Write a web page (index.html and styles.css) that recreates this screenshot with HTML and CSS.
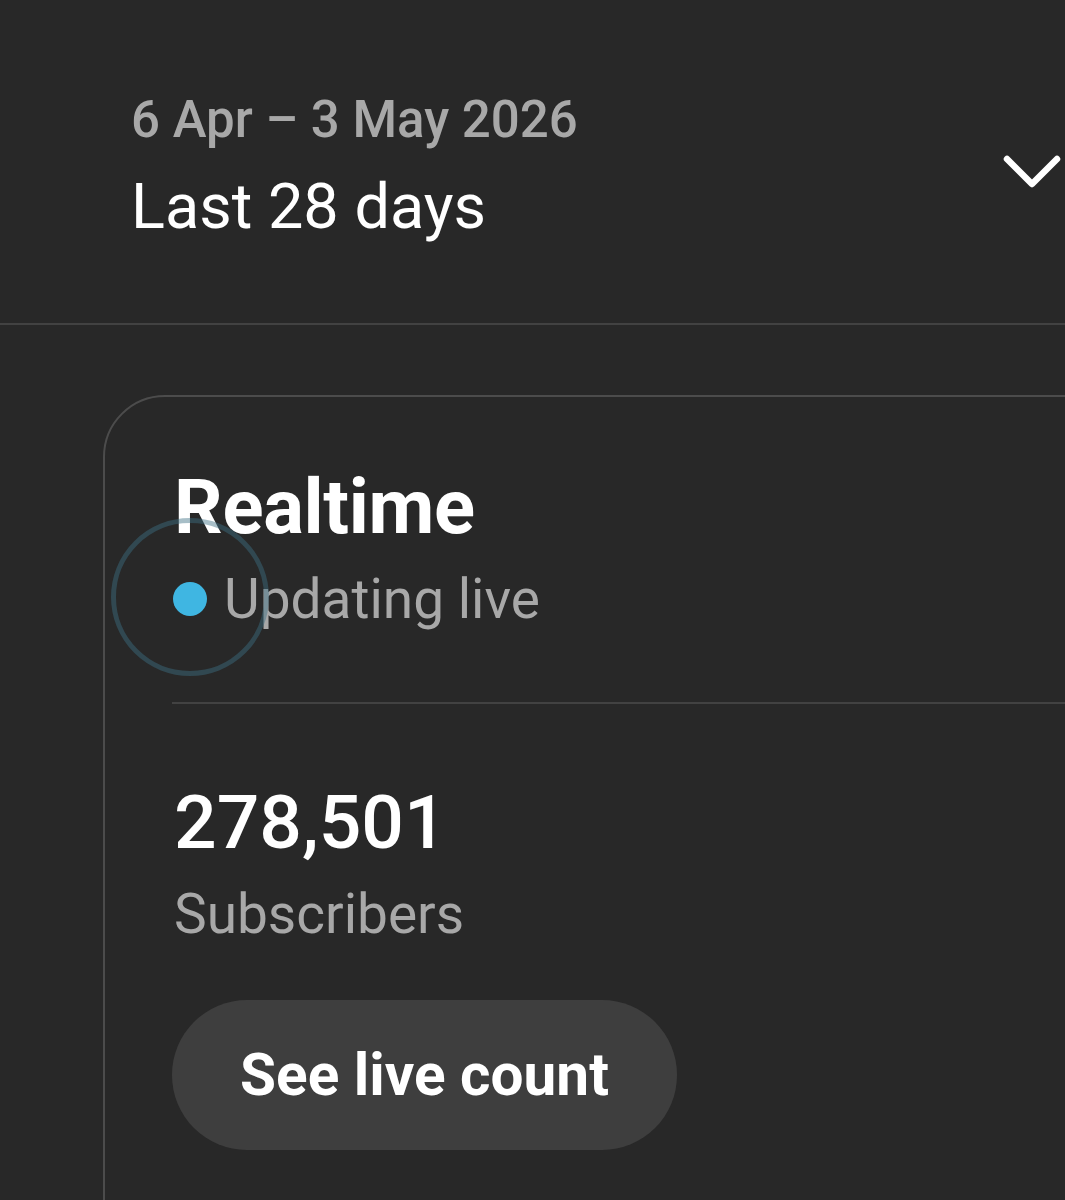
FILE: index.html
```html
<!DOCTYPE html>
<html lang="en">
<head>
<meta charset="utf-8">
<title>Realtime</title>
<link rel="stylesheet" href="styles.css">
</head>
<body>
<header class="range">
  <div class="range-text">
    <div class="range-dates">6 Apr – 3 May 2026</div>
    <div class="range-label">Last 28 days</div>
  </div>
  <svg class="chevron" width="62" height="42" viewBox="0 0 62 42" aria-hidden="true">
    <path d="M6 7 L31 32 L56 7" fill="none" stroke="#ffffff" stroke-width="6.5" stroke-linecap="round" stroke-linejoin="round"/>
  </svg>
</header>
<section class="card">
  <h1 class="card-title">Realtime</h1>
  <div class="live">
    <span class="live-dot"><span class="ripple"></span></span>
    <span class="live-text">Updating live</span>
  </div>
  <hr class="card-divider">
  <div class="count">278,501</div>
  <div class="count-label">Subscribers</div>
  <button class="live-btn">See live count</button>
</section>
</body>
</html>
```
FILE: styles.css
```css
html, body {
  margin: 0;
  padding: 0;
}
body {
  background: #282828;
  font-family: Roboto, "Noto Sans", Arial, sans-serif;
  color: #ffffff;
  width: 1065px;
  height: 1200px;
  overflow: hidden;
}
.range {
  display: flex;
  justify-content: space-between;
  align-items: flex-start;
  padding: 89px 0 79px 131px;
  border-bottom: 2px solid #424242;
}
.range-dates {
  font-size: 51px;
  line-height: 62px;
  font-weight: 500;
  color: #a8a8a8;
}
.range-label {
  margin-top: 18px;
  font-size: 63px;
  line-height: 75px;
  color: #ffffff;
}
.chevron {
  margin-top: 63px;
  margin-right: 2px;
  display: block;
}
.card {
  margin: 70px 0 0 103px;
  width: 1100px;
  border: 2px solid #4c4c4c;
  border-radius: 62px 0 0 0;
  padding: 63px 0 200px 69px;
  box-sizing: border-box;
}
.card-title {
  margin: 0;
  font-size: 76px;
  line-height: 94px;
  font-weight: 700;
  letter-spacing: -0.3px;
}
.live {
  margin-top: 11px;
  display: flex;
  align-items: center;
  gap: 17px;
  margin-left: -1px;
}
.live-dot {
  position: relative;
  width: 34px;
  height: 34px;
  border-radius: 50%;
  background: #3fb6e2;
  flex: none;
}
.ripple {
  position: absolute;
  left: 50%;
  top: 50%;
  width: 158px;
  height: 158px;
  margin: -81px 0 0 -79px;
  border-radius: 50%;
  border: 5px solid rgba(60, 110, 130, 0.45);
  box-sizing: border-box;
}
.live-text {
  font-size: 55px;
  line-height: 68px;
  color: #a8a8a8;
}
.card-divider {
  margin: 69px 0 0 -2px;
  border: 0;
  height: 2px;
  background: #424242;
}
.count {
  margin-top: 71px;
  font-size: 75px;
  line-height: 94px;
  font-weight: 500;
}
.count-label {
  margin-top: 10px;
  font-size: 55px;
  line-height: 70px;
  color: #a8a8a8;
}
.live-btn {
  display: block;
  margin: 51px 0 0 -2px;
  width: 505px;
  height: 150px;
  border: 0;
  border-radius: 75px;
  background: #3e3e3e;
  color: #ffffff;
  font-family: Roboto, "Noto Sans", Arial, sans-serif;
  font-size: 58.5px;
  font-weight: 700;
  padding: 0;
}
```
